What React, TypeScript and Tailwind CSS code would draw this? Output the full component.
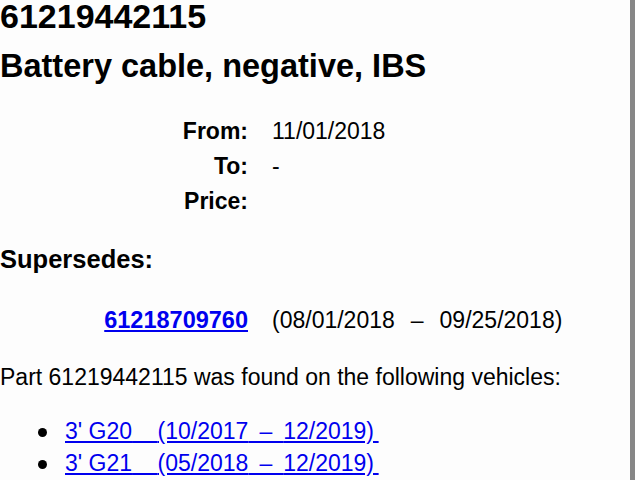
export default function App() {
  const dates = [
    { label: "From:", value: "11/01/2018" },
    { label: "To:", value: "-" },
    { label: "Price:", value: "" },
  ]

  const vehicles = [
    { model: "3' G20", from: "(10/2017", to: "12/2019)" },
    { model: "3' G21", from: "(05/2018", to: "12/2019)" },
  ]

  return (
    <div className="flex h-screen w-full overflow-hidden bg-white text-black font-['Liberation_Sans',Arial,sans-serif]">
      <main className="flex-1 overflow-hidden bg-[#fdfdfd]">
        <h1 className="text-[34px] leading-[32px] font-bold">61219442115</h1>
        <h2 className="mt-[14px] text-[32.5px] leading-[40px] font-bold">Battery cable, negative, IBS</h2>

        <div className="mt-[28px] grid grid-cols-[248px_1fr] gap-x-[24px] text-[23px] leading-[35px]">
          {dates.map((d) => (
            <div key={d.label} className="contents">
              <div className="text-right font-bold">{d.label}</div>
              <div>{d.value}</div>
            </div>
          ))}
        </div>

        <h3 className="mt-[25px] text-[25.5px] leading-[30px] font-bold">Supersedes:</h3>

        <div className="mt-[29px] grid grid-cols-[248px_1fr] gap-x-[24px] text-[23px] leading-[35px]">
          <div className="text-right">
            <a href="#" className="text-[23.5px] font-bold text-[#0000ee] underline">61218709760</a>
          </div>
          <div>
            (08/01/2018<span className="mx-[16px]">–</span>09/25/2018)
          </div>
        </div>

        <p className="mt-[22px] text-[23px] leading-[35px]">
          Part 61219442115 was found on the following vehicles:
        </p>

        <ul className="mt-[20px] text-[23px] leading-[32px]">
          {vehicles.map((v) => (
            <li key={v.model} className="flex">
              <span className="ml-[38px] mr-[18px] mt-[13px] h-[9px] w-[9px] shrink-0 rounded-full bg-black" />
              <a href="#" className="text-[#0000ee] underline">
                {v.model}
                {"\u00a0\u00a0\u00a0\u00a0"}
                {v.from}
                {"\u00a0\u2009–\u2009\u00a0"}
                {v.to}
                {"\u202f"}
              </a>
            </li>
          ))}
        </ul>
      </main>
      <div className="w-[5px] bg-[#878787]" />
      <div className="w-[5px] bg-white" />
    </div>
  )
}
